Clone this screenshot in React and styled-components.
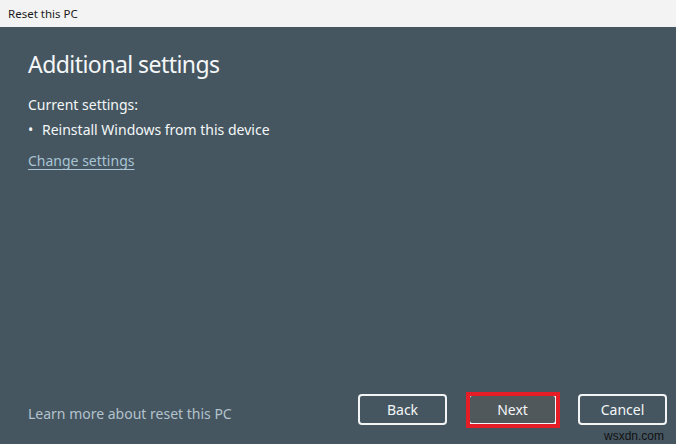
import React from "react";
import styled, { createGlobalStyle } from "styled-components";

const Global = createGlobalStyle`
  html, body { margin: 0; padding: 0; }
  body { width: 676px; height: 444px; overflow: hidden; background: #455661; }
`;

const Window = styled.div`
  position: relative;
  width: 676px;
  height: 444px;
  display: flex;
  flex-direction: column;
  font-family: "Noto Sans", "Open Sans", sans-serif;
  background: #455661;
  overflow: hidden;
`;

const TitleBar = styled.div`
  height: 27px;
  flex: none;
  background: #f3f3f3;
  display: flex;
  align-items: center;
  padding: 0 8px;
  font-size: 11.5px;
  color: #1a1a1a;
`;

const Content = styled.div`
  flex: 1;
  display: flex;
  flex-direction: column;
  padding: 0 28px;
  color: #f4f6f7;
`;

const Heading = styled.h1`
  margin: 20px 0 0;
  font-weight: 400;
  font-size: 23px;
  letter-spacing: -0.55px;
  line-height: 34px;
`;

const Text = styled.div`
  font-size: 14px;
  line-height: 20px;
  margin-top: ${(p) => p.$mt || 0}px;
`;

const Bullet = styled.div`
  display: flex;
  font-size: 14px;
  line-height: 20px;
  margin-top: 5px;
  &::before {
    content: "•";
    width: 14px;
    flex: none;
  }
`;

const Link = styled.a`
  font-size: 14px;
  line-height: 20px;
  margin-top: 11px;
  color: #a9c4d4;
  text-decoration: underline;
  text-underline-offset: 3px;
  align-self: flex-start;
`;

const Footer = styled.div`
  margin-top: auto;
  display: flex;
  align-items: center;
  padding: 0 9px 19px 28px;
`;

const LearnMore = styled.span`
  font-size: 14px;
  color: #b3c2cc;
  margin-top: 7px;
  margin-right: auto;
`;

const Buttons = styled.div`
  display: flex;
  gap: 21px;
`;

const Button = styled.button`
  position: relative;
  width: 89px;
  height: 31px;
  box-sizing: border-box;
  border: 2px solid #f2f4f5;
  border-radius: 4px;
  background: ${(p) => (p.$primary ? "#50585c" : "transparent")};
  color: #f4f6f7;
  font-family: inherit;
  font-size: 14px;
  padding: 0;
  outline: none;
  ${(p) =>
    p.$highlight &&
    `
    &::after {
      content: "";
      position: absolute;
      left: -4px;
      right: -5px;
      top: -4px;
      bottom: -5px;
      border: 4px solid #e41d26;
    }
  `}
`;

const Watermark = styled.span`
  position: absolute;
  right: 12px;
  bottom: 1px;
  font-family: "Liberation Sans", Arial, sans-serif;
  font-size: 12px;
  color: #111;
`;

export default function App() {
  return (
    <>
      <Global />
      <Window>
        <TitleBar>Reset this PC</TitleBar>
        <Content>
          <Heading>Additional settings</Heading>
          <Text $mt={14}>Current settings:</Text>
          <Bullet>Reinstall Windows from this device</Bullet>
          <Link>Change settings</Link>
        </Content>
        <Footer>
          <LearnMore>Learn more about reset this PC</LearnMore>
          <Buttons>
            <Button>Back</Button>
            <Button $primary $highlight>Next</Button>
            <Button>Cancel</Button>
          </Buttons>
        </Footer>
        <Watermark>wsxdn.com</Watermark>
      </Window>
    </>
  );
}
